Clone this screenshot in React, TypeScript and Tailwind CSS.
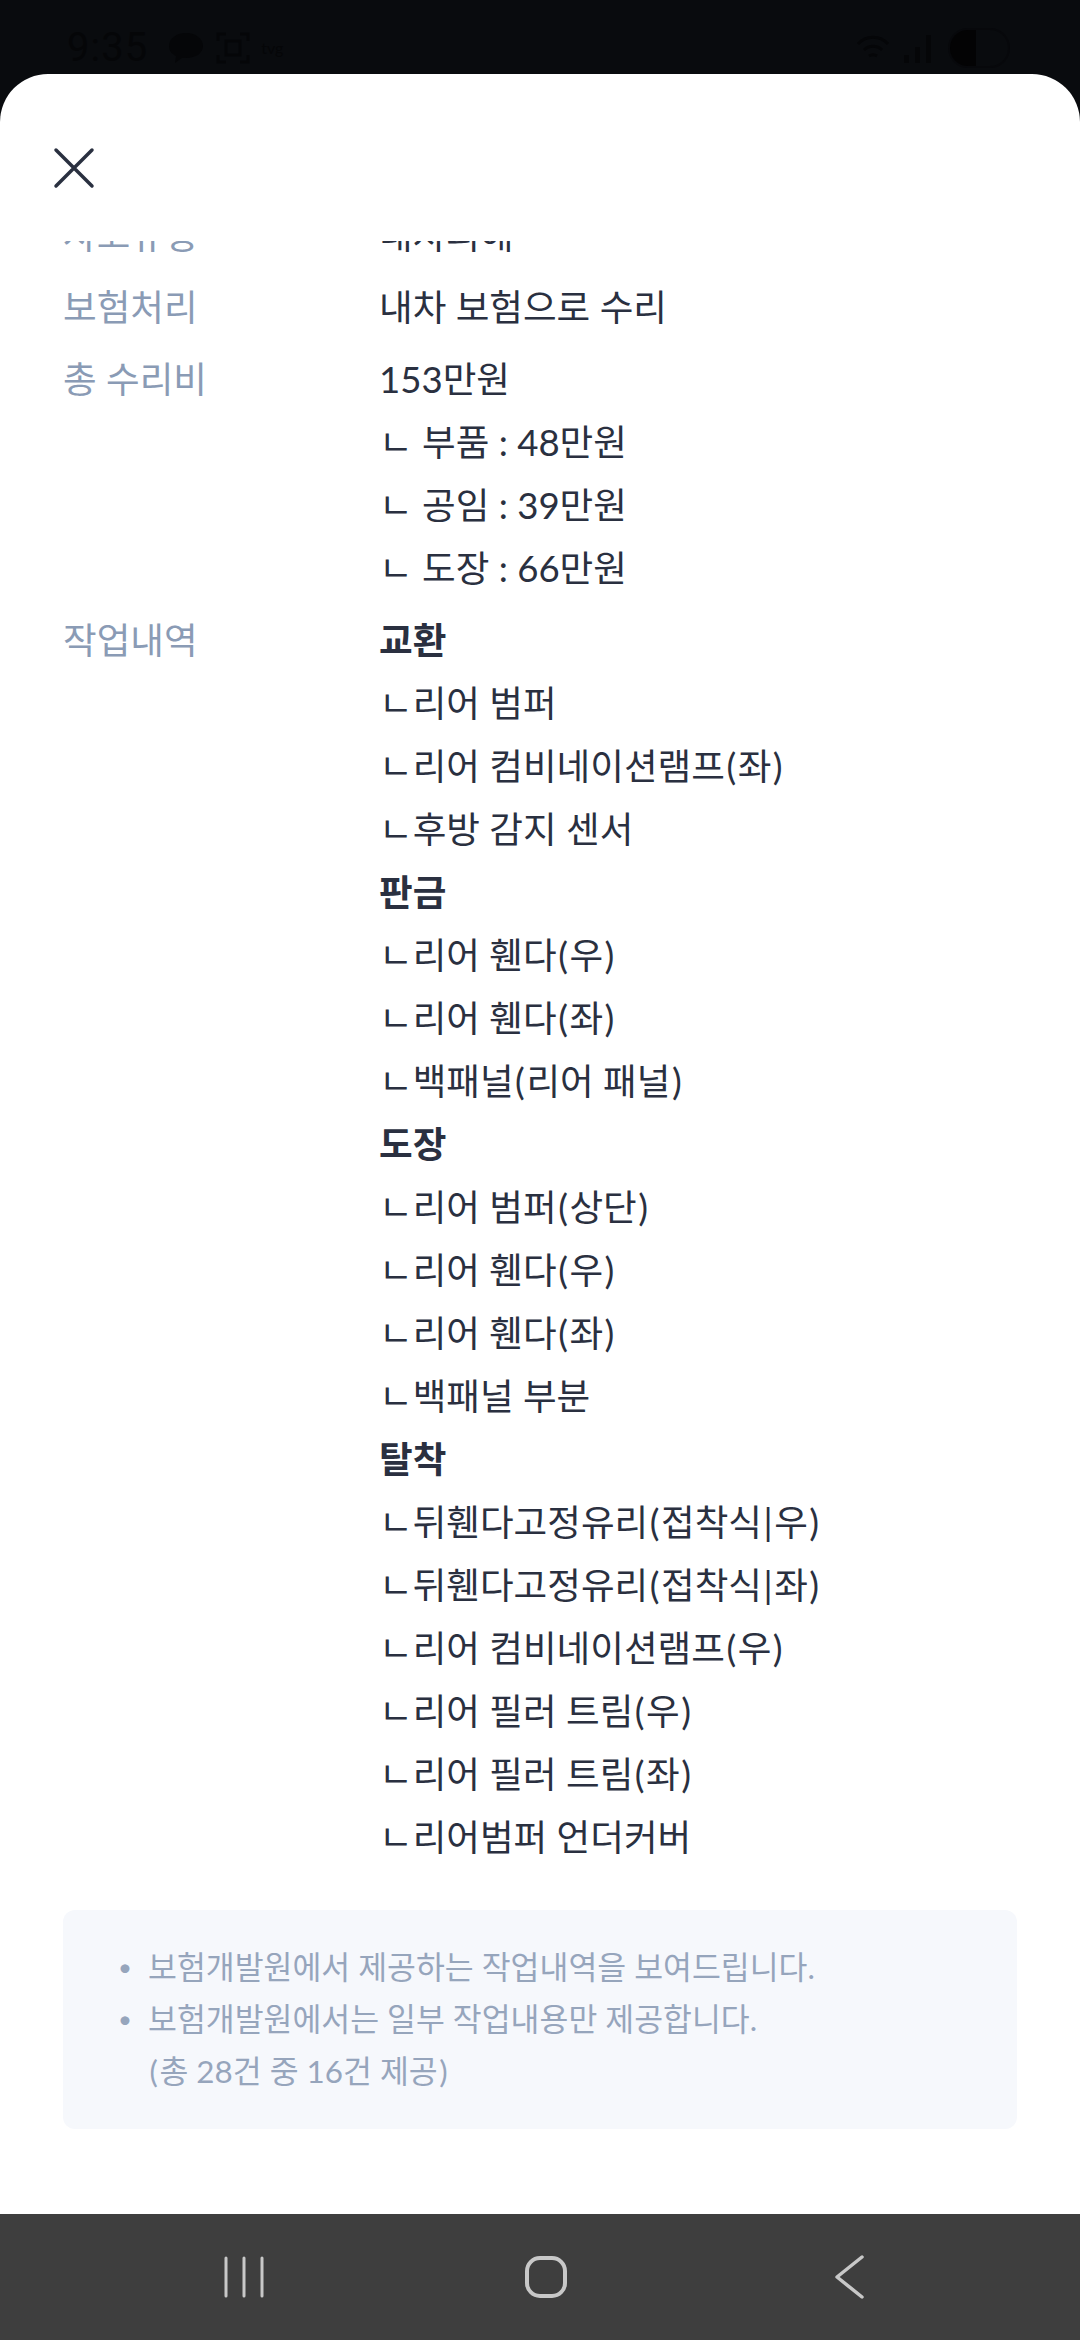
const rows = [
  { text: "교환", bold: true },
  { text: "ㄴ리어 범퍼" },
  { text: "ㄴ리어 컴비네이션램프(좌)" },
  { text: "ㄴ후방 감지 센서" },
  { text: "판금", bold: true },
  { text: "ㄴ리어 휀다(우)" },
  { text: "ㄴ리어 휀다(좌)" },
  { text: "ㄴ백패널(리어 패널)" },
  { text: "도장", bold: true },
  { text: "ㄴ리어 범퍼(상단)" },
  { text: "ㄴ리어 휀다(우)" },
  { text: "ㄴ리어 휀다(좌)" },
  { text: "ㄴ백패널 부분" },
  { text: "탈착", bold: true },
  { text: "ㄴ뒤휀다고정유리(접착식|우)" },
  { text: "ㄴ뒤휀다고정유리(접착식|좌)" },
  { text: "ㄴ리어 컴비네이션램프(우)" },
  { text: "ㄴ리어 필러 트림(우)" },
  { text: "ㄴ리어 필러 트림(좌)" },
  { text: "ㄴ리어범퍼 언더커버" },
];

function Label({ children }: { children: string }) {
  return <div className="w-[316px] shrink-0 text-[#8a9bb5]">{children}</div>;
}

// parens and pipes sit wider in the reference font
function Spaced({ text }: { text: string }) {
  return (
    <>
      {text.split(/([()|])/).map((part, i) =>
        i % 2 === 1 ? (
          <span key={i} className="px-[1.5px]">
            {part}
          </span>
        ) : (
          part
        )
      )}
    </>
  );
}

function StatusBar() {
  return (
    <div className="h-[74px] shrink-0 flex items-center pl-[67px] pr-[70px] pt-[22px] text-[#050608]">
      <span className="text-[40px] leading-none tracking-[1px]" style={{ fontFamily: "Roboto, sans-serif" }}>
        9:35
      </span>
      {/* chat bubble */}
      <svg className="ml-[20px]" width="36" height="32" viewBox="0 0 36 32" fill="currentColor">
        <path d="M18 1C8 1 1 7 1 14c0 5 3 8 7 10l-1 7 7-5h4c10 0 17-5 17-12S28 1 18 1z" />
      </svg>
      {/* screenshot */}
      <svg className="ml-[12px]" width="34" height="32" viewBox="0 0 34 32" fill="none" stroke="currentColor" strokeWidth="3">
        <path d="M2 9V2h8M24 2h8v7M32 23v7h-8M10 30H2v-7" />
        <rect x="10" y="9" width="14" height="14" />
      </svg>
      <span className="ml-[11px] text-[16px] leading-none">tvg</span>
      <div className="flex-1" />
      {/* wifi */}
      <svg width="34" height="30" viewBox="0 0 34 30" fill="none" stroke="currentColor" strokeWidth="3">
        <path d="M2 11C10 2 24 2 32 11M8 17c5-5 13-5 18 0M13 23c3-2 5-2 8 0" />
      </svg>
      {/* signal */}
      <svg className="ml-[14px]" width="28" height="30" viewBox="0 0 28 30" fill="currentColor">
        <rect x="0" y="22" width="5" height="8" />
        <rect x="11" y="14" width="5" height="16" />
        <rect x="22" y="2" width="5" height="28" />
      </svg>
      {/* battery */}
      <div className="ml-[16px] w-[62px] h-[40px] rounded-full border-[2px] border-[#07080b] overflow-hidden">
        <div className="w-[26px] h-full bg-[#030304]" />
      </div>
    </div>
  );
}

export default function App() {
  return (
    <div
      className="w-[1080px] h-[2340px] bg-[#090b0e] flex flex-col overflow-hidden text-[36.6px] leading-[63px] text-[#2a3040]"
      style={{ fontFamily: 'Lato, "Noto Sans CJK KR", sans-serif' }}
    >
      <StatusBar />
      <div className="flex-1 bg-white rounded-t-[48px] flex flex-col overflow-hidden">
        <div className="h-[167px] shrink-0 pl-[53px] pt-[73px]">
          <svg width="42" height="42" viewBox="0 0 42 42" fill="none" stroke="#2a3040" strokeWidth="3.5" strokeLinecap="round">
            <path d="M3 3L39 39M39 3L3 39" />
          </svg>
        </div>
        <div className="h-[2099px] overflow-hidden">
          <div className="-mt-[37px] px-[63px]">
            <div className="flex">
              <Label>사고유형</Label>
              <div>내차피해</div>
            </div>
            <div className="flex mt-[9px]">
              <Label>보험처리</Label>
              <div>내차 보험으로 수리</div>
            </div>
            <div className="flex mt-[9px]">
              <Label>총 수리비</Label>
              <div>
                <div>153만원</div>
                <div>ㄴ 부품 : 48만원</div>
                <div>ㄴ 공임 : 39만원</div>
                <div>ㄴ 도장 : 66만원</div>
              </div>
            </div>
            <div className="flex mt-[9px]">
              <Label>작업내역</Label>
              <div>
                {rows.map((row, i) => (
                  <div key={i} className={row.bold ? "font-bold" : ""}>
                    <Spaced text={row.text} />
                  </div>
                ))}
              </div>
            </div>
            <div className="mt-[41px] h-[219px] bg-[#f6f8fc] rounded-[12px] pl-[55px] pt-[31px] text-[31.4px] leading-[52px] text-[#96a5bc]">
              <div className="flex">
                <span className="w-[30px] text-[24px]">•</span>
                <span>보험개발원에서 제공하는 작업내역을 보여드립니다.</span>
              </div>
              <div className="flex">
                <span className="w-[30px] text-[24px]">•</span>
                <span>
                  보험개발원에서는 일부 작업내용만 제공합니다.
                  <br />
                  <Spaced text="(총 28건 중 16건 제공)" />
                </span>
              </div>
            </div>
          </div>
        </div>
      </div>
      <div className="h-[126px] shrink-0 bg-[#3e3e3e] flex items-center pl-[224px]">
        <svg width="40" height="42" viewBox="0 0 40 42" fill="none" stroke="#c8c8c8" strokeWidth="3" strokeLinecap="round">
          <path d="M2 2V40M20 2V40M38 2V40" />
        </svg>
        <svg className="ml-[261px]" width="42" height="42" viewBox="0 0 42 42" fill="none" stroke="#c8c8c8" strokeWidth="4">
          <rect x="2" y="2" width="38" height="38" rx="13" />
        </svg>
        <svg className="ml-[267px]" width="30" height="44" viewBox="0 0 30 44" fill="none" stroke="#c8c8c8" strokeWidth="3.5" strokeLinecap="round" strokeLinejoin="round">
          <path d="M28 2L3 22L28 42" />
        </svg>
      </div>
    </div>
  );
}
